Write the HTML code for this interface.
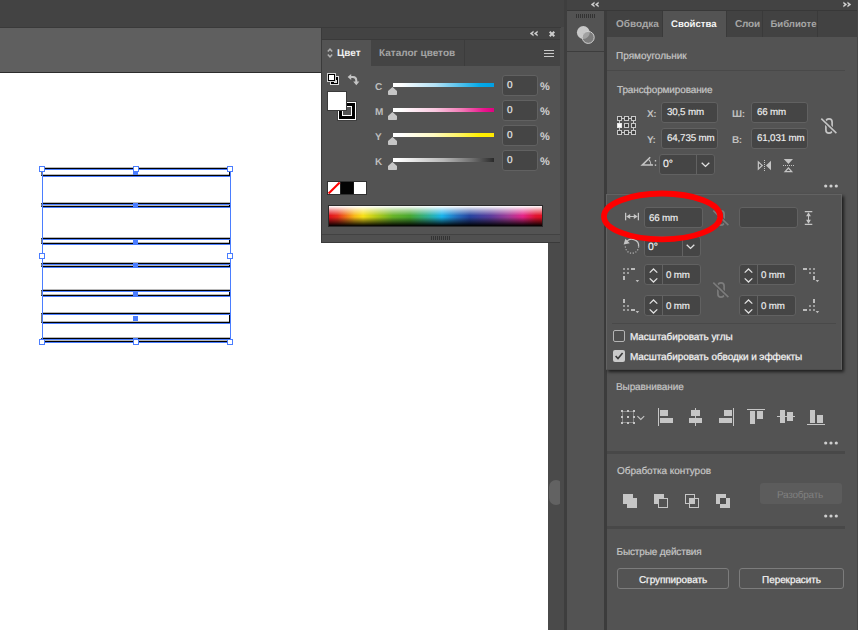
<!DOCTYPE html>
<html>
<head>
<meta charset="utf-8">
<style>
html,body{margin:0;padding:0;}
body{width:858px;height:630px;overflow:hidden;position:relative;background:#535353;font-family:"Liberation Sans",sans-serif;font-size:11px;color:#d6d6d6;text-rendering:geometricPrecision;}
.abs{position:absolute;}
.t{position:absolute;white-space:nowrap;line-height:1;}
.inp{position:absolute;background:#454545;border:1px solid #616161;border-radius:3px;box-sizing:border-box;color:#e8e8e8;}
.inp span{position:absolute;left:6px;top:4px;white-space:nowrap;line-height:1;font-size:11px;}
.lab{font-size:10px;color:#c6c6c6;-webkit-text-stroke:0.2px #c6c6c6;}
.inp span.v{left:5px;top:5px;font-size:9.75px;letter-spacing:-0.15px;color:#f0f0f0;-webkit-text-stroke:0.15px #f0f0f0;}
.chk{font-size:10px;color:#f2f2f2;-webkit-text-stroke:0.25px #f2f2f2;letter-spacing:-0.08px;}
.sep{position:absolute;background:#484848;height:3px;left:607px;width:251px;}
svg{position:absolute;overflow:visible;}
</style>
</head>
<body>
<!-- top app bar -->
<div class="abs" style="left:0;top:0;width:566px;height:27px;background:#434343;"></div>
<!-- document tab strip -->
<div class="abs" style="left:0;top:27px;width:322px;height:45px;background:#5f5f5f;border-top:1px solid #3a3a3a;box-sizing:border-box;"></div>
<div class="abs" style="left:0;top:72px;width:322px;height:1px;background:#2c2c2c;"></div>
<!-- canvas -->
<div class="abs" style="left:0;top:73px;width:548px;height:557px;background:#ffffff;"></div>
<!-- scrollbar -->
<div class="abs" style="left:548px;top:27px;width:16px;height:603px;background:#4a4a4a;"></div>
<div class="abs" style="left:549px;top:480px;width:14px;height:25px;border-radius:7px;background:#626262;"></div>
<div class="abs" style="left:564px;top:0;width:3px;height:630px;background:#3e3e3e;"></div>
<!-- dock -->
<div class="abs" style="left:567px;top:0;width:291px;height:10px;background:#434343;"></div>
<div class="abs" style="left:567px;top:10px;width:291px;height:1px;background:#383838;"></div>
<div class="abs" style="left:567px;top:11px;width:37px;height:619px;background:#535353;"></div>
<div class="abs" style="left:567px;top:51px;width:37px;height:1px;background:#3d3d3d;"></div>
<div class="abs" style="left:604px;top:11px;width:3px;height:619px;background:#3c3c3c;"></div>
<!-- properties panel bg -->
<div class="abs" style="left:607px;top:11px;width:251px;height:619px;background:#535353;"></div>
<div class="abs" style="left:607px;top:11px;width:251px;height:26px;background:#424242;"></div>

<!--COLORPANEL-->
<!-- color panel -->
<div class="abs" style="left:321px;top:27px;width:240px;height:216px;background:#3a3a3a;"></div>
<div class="abs" style="left:322px;top:28px;width:238px;height:12px;background:#434343;"></div>
<div class="abs" style="left:322px;top:39px;width:238px;height:1px;background:#3a3a3a;"></div>
<div class="abs" style="left:322px;top:40px;width:238px;height:26px;background:#444444;"></div>
<div class="abs" style="left:322px;top:40px;width:49px;height:27px;background:#535353;"></div>
<div class="abs" style="left:464px;top:40px;width:1px;height:26px;background:#3c3c3c;"></div>
<div class="abs" style="left:322px;top:66px;width:238px;height:168px;background:#535353;"></div>
<div class="abs" style="left:322px;top:40px;width:49px;height:27px;background:#535353;"></div>
<div class="abs" style="left:322px;top:234px;width:238px;height:1px;background:#424242;"></div>
<div class="abs" style="left:322px;top:235px;width:238px;height:7px;background:#505050;"></div>
<div class="abs" style="left:560px;top:28px;width:4px;height:602px;background:#4a4a4a;"></div>
<!-- header icons -->
<svg style="left:530px;top:31px;" width="8" height="5" viewBox="0 0 8 5"><path d="M3.4 0 L0 2.5 L3.4 5 L3.4 3.5 L2.1 2.5 L3.4 1.5 Z M7.5 0 L4.1 2.5 L7.5 5 L7.5 3.5 L6.2 2.5 L7.5 1.5 Z" fill="#d4d4d4" stroke="#d4d4d4" stroke-width="0.3"/></svg>
<svg style="left:549px;top:31px;" width="6" height="6" viewBox="0 0 6 6"><path d="M0.7 0.7 L5.3 5.3 M5.3 0.7 L0.7 5.3" stroke="#cccccc" stroke-width="2"/></svg>
<svg style="left:544px;top:50px;" width="10" height="7" viewBox="0 0 10 7" shape-rendering="crispEdges"><path d="M0 0.5 H10 M0 3.5 H10 M0 6.5 H10" stroke="#c8c8c8" stroke-width="1"/></svg>
<!-- tab labels -->
<svg style="left:327px;top:48px;" width="6" height="10" viewBox="0 0 6 10"><path d="M0.8 3.6 L3 1.2 L5.2 3.6 M0.8 6.4 L3 8.8 L5.2 6.4" stroke="#b0b0b0" stroke-width="1.5" fill="none"/></svg>
<div class="t" id="tcvet" style="left:337px;top:49px;font-size:10px;font-weight:bold;color:#f0f0f0;">Цвет</div>
<div class="t" id="tkat" style="left:379px;top:49px;font-size:10px;font-weight:bold;color:#a4a4a4;">Каталог цветов</div>
<!-- fill/stroke -->
<svg style="left:327px;top:73px;" width="12" height="12" viewBox="0 0 12 12" shape-rendering="crispEdges"><rect x="3" y="3" width="9" height="9" fill="#e0e0e0"/><rect x="4" y="4" width="7" height="7" fill="#000"/><rect x="7" y="7" width="3" height="3" fill="#ddd"/><rect x="8" y="8" width="2" height="2" fill="#000" opacity="0"/><rect x="0" y="0" width="9" height="9" fill="#d0d0d0"/><rect x="1" y="1" width="7" height="7" fill="#000"/><rect x="2" y="2" width="5" height="5" fill="#fff"/></svg>
<svg style="left:347px;top:73px;" width="13" height="13" viewBox="0 0 13 13"><path d="M3.5 4 H6 Q9.3 4 9.3 7.5 V9" stroke="#c4c4c4" stroke-width="2" fill="none"/><path d="M0.6 4 L4.2 1 V7 Z M9.3 12.3 L6.2 8.6 H12.4 Z" fill="#c4c4c4"/></svg>
<svg style="left:337px;top:101px;" width="20" height="20" viewBox="0 0 20 20" shape-rendering="crispEdges"><rect width="20" height="20" fill="#3e3e3e"/><rect x="1" y="1" width="18" height="18" fill="#fff"/><rect x="2" y="2" width="16" height="16" fill="#000"/><rect x="5" y="5" width="10" height="10" fill="#fff"/><rect x="6" y="6" width="8" height="8" fill="#535353"/></svg>
<div class="abs" style="left:327px;top:91px;width:20px;height:20px;background:#fff;border:1px solid #3a3a3a;box-sizing:border-box;"></div>
<div class="t" style="left:375px;top:83px;font-size:10px;font-weight:bold;color:#bdbdbd;">C</div>
<div class="abs" style="left:393px;top:83px;width:101px;height:4px;background:linear-gradient(to right,#fff,#fff 8%,#b4e2f6 42%,#4cbfec 68%,#04a9e8 86%,#009fe3);"></div>
<svg style="left:388px;top:87px;" width="9" height="9" viewBox="0 0 9 9"><path d="M4.5 0 L9 4 V7.2 Q9 8 8.2 8 H0.8 Q0 8 0 7.2 V4 Z" fill="#c6c6c6"/></svg>
<div class="inp" style="left:502px;top:75px;width:36px;height:21px;border-radius:3px;"><span style="left:4px;top:5px;font-size:10px;-webkit-text-stroke:0.2px #e8e8e8;">0</span></div>
<div class="t" style="left:540px;top:82px;font-size:11px;font-weight:bold;color:#d0d0d0;">%</div>
<div class="t" style="left:375px;top:108px;font-size:10px;font-weight:bold;color:#bdbdbd;">M</div>
<div class="abs" style="left:393px;top:108px;width:101px;height:4px;background:linear-gradient(to right,#fff,#fff 8%,#fac8e0 42%,#f27ab6 68%,#e9168e 90%,#e0007f);"></div>
<svg style="left:388px;top:112px;" width="9" height="9" viewBox="0 0 9 9"><path d="M4.5 0 L9 4 V7.2 Q9 8 8.2 8 H0.8 Q0 8 0 7.2 V4 Z" fill="#c6c6c6"/></svg>
<div class="inp" style="left:502px;top:100px;width:36px;height:21px;border-radius:3px;"><span style="left:4px;top:5px;font-size:10px;-webkit-text-stroke:0.2px #e8e8e8;">0</span></div>
<div class="t" style="left:540px;top:107px;font-size:11px;font-weight:bold;color:#d0d0d0;">%</div>
<div class="t" style="left:375px;top:133px;font-size:10px;font-weight:bold;color:#bdbdbd;">Y</div>
<div class="abs" style="left:393px;top:133px;width:101px;height:4px;background:linear-gradient(to right,#fff,#fff 8%,#fffbc4 40%,#fff566 65%,#fff000 86%,#ffe800);"></div>
<svg style="left:388px;top:137px;" width="9" height="9" viewBox="0 0 9 9"><path d="M4.5 0 L9 4 V7.2 Q9 8 8.2 8 H0.8 Q0 8 0 7.2 V4 Z" fill="#c6c6c6"/></svg>
<div class="inp" style="left:502px;top:125px;width:36px;height:21px;border-radius:3px;"><span style="left:4px;top:5px;font-size:10px;-webkit-text-stroke:0.2px #e8e8e8;">0</span></div>
<div class="t" style="left:540px;top:132px;font-size:11px;font-weight:bold;color:#d0d0d0;">%</div>
<div class="t" style="left:375px;top:158px;font-size:10px;font-weight:bold;color:#bdbdbd;">K</div>
<div class="abs" style="left:393px;top:158px;width:101px;height:4px;background:linear-gradient(to right,#fff,#fff 5%,#b8b8b8 50%,#707070 78%,#2a2a2a 100%);"></div>
<svg style="left:388px;top:162px;" width="9" height="9" viewBox="0 0 9 9"><path d="M4.5 0 L9 4 V7.2 Q9 8 8.2 8 H0.8 Q0 8 0 7.2 V4 Z" fill="#c6c6c6"/></svg>
<div class="inp" style="left:502px;top:150px;width:36px;height:21px;border-radius:3px;"><span style="left:4px;top:5px;font-size:10px;-webkit-text-stroke:0.2px #e8e8e8;">0</span></div>
<div class="t" style="left:540px;top:157px;font-size:11px;font-weight:bold;color:#d0d0d0;">%</div>

<!-- swatches -->
<svg style="left:327px;top:181px;" width="40" height="14" viewBox="0 0 40 14"><rect width="40" height="14" fill="#303030" shape-rendering="crispEdges"/><rect x="1" y="1" width="12.3" height="12" fill="#fff"/><rect x="13.3" y="1" width="13.3" height="12" fill="#030303"/><rect x="27" y="1" width="12" height="12" fill="#fff"/><path d="M1.6 12.4 L12.7 1.6" stroke="#ff0000" stroke-width="2.1"/><rect x="0" y="0" width="1" height="14" fill="#303030"/><rect x="0" y="13" width="14" height="1" fill="#303030"/><rect x="0" y="0" width="14" height="1" fill="#303030"/></svg>
<!-- spectrum -->
<div class="abs" style="left:328px;top:205px;width:215px;height:22px;background:#2a2a2a;"></div>
<div class="abs" style="left:329px;top:206px;width:213px;height:20px;background:linear-gradient(to right,#e0101c 0%,#e8301c 4%,#f8b818 12%,#f8e018 16%,#b8cc18 22%,#68b428 30%,#48a830 38%,#30b090 46%,#18b4ec 53%,#2470c0 60%,#2444a0 66%,#5c3c9c 76%,#a03c98 84%,#e42488 91%,#e01430 97%,#e01020 100%);"></div>
<div class="abs" style="left:329px;top:206px;width:213px;height:20px;background:linear-gradient(to bottom,rgba(255,255,255,1) 0%,rgba(255,255,255,0.55) 20%,rgba(255,255,255,0) 48%,rgba(0,0,0,0) 55%,rgba(0,0,0,0.55) 80%,rgba(0,0,0,1) 100%);"></div>
<!-- grip -->
<div class="abs" style="left:431px;top:236px;width:19px;height:4px;background:repeating-linear-gradient(to right,#333 0,#333 1px,transparent 1px,transparent 2px);"></div>
<!--/COLORPANEL-->
<!--ARTWORK-->
<div class="abs" style="left:42px;top:167px;width:188px;height:1px;background:rgba(0,0,0,0.28);"></div>
<div class="abs" style="left:43px;top:174px;width:186px;height:1px;background:rgba(0,0,0,0.28);"></div>
<div class="abs" style="left:42px;top:202px;width:188px;height:1px;background:rgba(0,0,0,0.28);"></div>
<div class="abs" style="left:43px;top:205px;width:186px;height:1px;background:rgba(0,0,0,0.28);"></div>
<div class="abs" style="left:42px;top:237px;width:188px;height:1px;background:rgba(0,0,0,0.28);"></div>
<div class="abs" style="left:43px;top:242px;width:186px;height:1px;background:rgba(0,0,0,0.28);"></div>
<div class="abs" style="left:42px;top:262px;width:188px;height:1px;background:rgba(0,0,0,0.28);"></div>
<div class="abs" style="left:43px;top:265px;width:186px;height:1px;background:rgba(0,0,0,0.28);"></div>
<div class="abs" style="left:42px;top:289px;width:188px;height:1px;background:rgba(0,0,0,0.28);"></div>
<div class="abs" style="left:43px;top:294px;width:186px;height:1px;background:rgba(0,0,0,0.28);"></div>
<div class="abs" style="left:42px;top:312px;width:188px;height:1px;background:rgba(0,0,0,0.28);"></div>
<div class="abs" style="left:43px;top:321px;width:186px;height:1px;background:rgba(0,0,0,0.28);"></div>
<div class="abs" style="left:42px;top:337px;width:188px;height:1px;background:rgba(0,0,0,0.28);"></div>
<div class="abs" style="left:43px;top:340px;width:186px;height:1px;background:rgba(0,0,0,0.28);"></div>
<div class="abs" style="left:41px;top:168px;width:189px;height:8px;border:1px solid #000;border-left-color:#777;box-sizing:border-box;"></div>
<div class="abs" style="left:42px;top:169px;width:189px;height:1px;background:#4a7dff;"></div>
<div class="abs" style="left:42px;top:176px;width:189px;height:1px;background:#4a7dff;"></div>
<div class="abs" style="left:133px;top:170px;width:5px;height:5px;background:#4a7dff;"></div>
<div class="abs" style="left:41px;top:203px;width:189px;height:4px;border:1px solid #000;border-left-color:#777;box-sizing:border-box;"></div>
<div class="abs" style="left:42px;top:204px;width:189px;height:1px;background:#4a7dff;"></div>
<div class="abs" style="left:42px;top:207px;width:189px;height:1px;background:#4a7dff;"></div>
<div class="abs" style="left:133px;top:203px;width:5px;height:5px;background:#4a7dff;"></div>
<div class="abs" style="left:41px;top:238px;width:189px;height:6px;border:1px solid #000;border-left-color:#777;box-sizing:border-box;"></div>
<div class="abs" style="left:42px;top:239px;width:189px;height:1px;background:#4a7dff;"></div>
<div class="abs" style="left:42px;top:244px;width:189px;height:1px;background:#4a7dff;"></div>
<div class="abs" style="left:133px;top:239px;width:5px;height:5px;background:#4a7dff;"></div>
<div class="abs" style="left:41px;top:263px;width:189px;height:4px;border:1px solid #000;border-left-color:#777;box-sizing:border-box;"></div>
<div class="abs" style="left:42px;top:264px;width:189px;height:1px;background:#4a7dff;"></div>
<div class="abs" style="left:42px;top:267px;width:189px;height:1px;background:#4a7dff;"></div>
<div class="abs" style="left:133px;top:263px;width:5px;height:5px;background:#4a7dff;"></div>
<div class="abs" style="left:41px;top:290px;width:189px;height:6px;border:1px solid #000;border-left-color:#777;box-sizing:border-box;"></div>
<div class="abs" style="left:42px;top:291px;width:189px;height:1px;background:#4a7dff;"></div>
<div class="abs" style="left:42px;top:296px;width:189px;height:1px;background:#4a7dff;"></div>
<div class="abs" style="left:133px;top:291px;width:5px;height:5px;background:#4a7dff;"></div>
<div class="abs" style="left:41px;top:313px;width:189px;height:10px;border:1px solid #000;border-left-color:#777;box-sizing:border-box;"></div>
<div class="abs" style="left:42px;top:314px;width:189px;height:1px;background:#4a7dff;"></div>
<div class="abs" style="left:42px;top:323px;width:189px;height:1px;background:#4a7dff;"></div>
<div class="abs" style="left:133px;top:316px;width:5px;height:5px;background:#4a7dff;"></div>
<div class="abs" style="left:41px;top:338px;width:189px;height:4px;border:1px solid #000;border-left-color:#777;box-sizing:border-box;"></div>
<div class="abs" style="left:42px;top:339px;width:189px;height:1px;background:#4a7dff;"></div>
<div class="abs" style="left:42px;top:342px;width:189px;height:1px;background:#4a7dff;"></div>
<div class="abs" style="left:133px;top:338px;width:5px;height:5px;background:#4a7dff;"></div>
<div class="abs" style="left:42px;top:169px;width:1px;height:174px;background:#4a7dff;"></div>
<div class="abs" style="left:230px;top:169px;width:1px;height:174px;background:#4a7dff;"></div>
<div class="abs" style="left:39px;top:166px;width:6px;height:6px;background:#fff;border:1px solid #4a7dff;box-sizing:border-box;"></div>
<div class="abs" style="left:39px;top:253px;width:6px;height:6px;background:#fff;border:1px solid #4a7dff;box-sizing:border-box;"></div>
<div class="abs" style="left:39px;top:339px;width:6px;height:6px;background:#fff;border:1px solid #4a7dff;box-sizing:border-box;"></div>
<div class="abs" style="left:133px;top:166px;width:6px;height:6px;background:#fff;border:1px solid #4a7dff;box-sizing:border-box;"></div>
<div class="abs" style="left:133px;top:339px;width:6px;height:6px;background:#fff;border:1px solid #4a7dff;box-sizing:border-box;"></div>
<div class="abs" style="left:227px;top:166px;width:6px;height:6px;background:#fff;border:1px solid #4a7dff;box-sizing:border-box;"></div>
<div class="abs" style="left:227px;top:253px;width:6px;height:6px;background:#fff;border:1px solid #4a7dff;box-sizing:border-box;"></div>
<div class="abs" style="left:227px;top:339px;width:6px;height:6px;background:#fff;border:1px solid #4a7dff;box-sizing:border-box;"></div>
<!--/ARTWORK-->
<!--PROPS-->
<!-- dock top icons -->
<svg style="left:591px;top:2px;" width="8" height="5" viewBox="0 0 8 5"><path d="M3.4 0 L0 2.5 L3.4 5 L3.4 3.5 L2.1 2.5 L3.4 1.5 Z M7.5 0 L4.1 2.5 L7.5 5 L7.5 3.5 L6.2 2.5 L7.5 1.5 Z" fill="#d4d4d4" stroke="#d4d4d4" stroke-width="0.3"/></svg>
<svg style="left:843px;top:2px;" width="8" height="5" viewBox="0 0 8 5"><path d="M0.5 0 L3.9 2.5 L0.5 5 L0.5 3.5 L1.8 2.5 L0.5 1.5 Z M4.6 0 L8 2.5 L4.6 5 L4.6 3.5 L5.9 2.5 L4.6 1.5 Z" fill="#d4d4d4" stroke="#d4d4d4" stroke-width="0.3"/></svg>
<div class="abs" style="left:576px;top:14px;width:19px;height:4px;background:repeating-linear-gradient(to right,#333 0,#333 1px,transparent 1px,transparent 2px);"></div>
<svg style="left:575px;top:24px;" width="22" height="22" viewBox="0 0 22 22"><defs><clipPath id="c1"><circle cx="8.3" cy="8.5" r="6.4"/></clipPath></defs><circle cx="8.3" cy="8.5" r="6.4" fill="#c8c8c8"/><circle cx="13.2" cy="13.4" r="6" fill="#7c7c7c"/><circle cx="13.2" cy="13.4" r="6" fill="#a2a2a2" clip-path="url(#c1)"/><circle cx="13.2" cy="13.4" r="6" fill="none" stroke="#d0d0d0" stroke-width="1"/></svg>
<!-- tabs -->
<div class="abs" style="left:663px;top:11px;width:63px;height:27px;background:#535353;"></div>
<div class="abs" style="left:662px;top:11px;width:1px;height:26px;background:#3a3a3a;"></div>
<div class="abs" style="left:726px;top:11px;width:1px;height:26px;background:#3a3a3a;"></div>
<div class="abs" style="left:762px;top:11px;width:1px;height:26px;background:#3a3a3a;"></div>
<div class="abs" style="left:817px;top:11px;width:1px;height:26px;background:#3a3a3a;"></div>
<div class="abs" style="left:857px;top:0px;width:1px;height:630px;background:#464646;"></div>
<div class="t" style="left:616px;top:20px;font-size:10px;font-weight:bold;color:#a6a6a6;">Обводка</div>
<div class="t" style="left:671px;top:20px;font-size:9.6px;font-weight:bold;color:#f4f4f4;">Свойства</div>
<div class="t" style="left:735px;top:20px;font-size:10px;font-weight:bold;color:#a6a6a6;letter-spacing:-0.2px;">Слои</div>
<div class="t" style="left:770.4px;top:20px;font-size:9.6px;font-weight:bold;color:#a6a6a6;">Библиоте</div>
<!-- object type -->
<div class="t lab" style="left:616px;top:52px;">Прямоугольник</div>
<div class="abs" style="left:607px;top:70px;width:238px;height:1px;background:#494949;"></div>
<div class="t lab" style="left:617px;top:86px;letter-spacing:-0.12px;">Трансформирование</div>
<!-- reference point -->
<svg style="left:617px;top:116px;" width="19" height="19" viewBox="0 0 19 19" shape-rendering="crispEdges"><g fill="#404040" stroke="#c8c8c8" stroke-width="1"><path d="M2.5 5 V7 M2.5 12 V14 M16.5 5 V7 M16.5 12 V14 M5 2.5 H7 M12 2.5 H14 M5 16.5 H7 M12 16.5 H14" fill="none"/><rect x="0.5" y="0.5" width="4" height="4"/><rect x="7.5" y="0.5" width="4" height="4"/><rect x="14.5" y="0.5" width="4" height="4"/><rect x="0.5" y="7.5" width="4" height="4" fill="#fff" stroke="#e8e8e8"/><rect x="7.5" y="7.5" width="4" height="4"/><rect x="14.5" y="7.5" width="4" height="4"/><rect x="0.5" y="14.5" width="4" height="4"/><rect x="7.5" y="14.5" width="4" height="4"/><rect x="14.5" y="14.5" width="4" height="4"/></g></svg>
<div class="t" style="left:647px;top:109.6px;font-size:10px;font-weight:bold;color:#c0c0c0;letter-spacing:-0.4px;">X:</div>
<div class="t" style="left:647px;top:135.6px;font-size:10px;font-weight:bold;color:#c0c0c0;letter-spacing:-0.4px;">Y:</div>
<div class="t" style="left:732px;top:109.6px;font-size:10px;font-weight:bold;color:#c0c0c0;letter-spacing:-0.4px;">Ш:</div>
<div class="t" style="left:732px;top:135.6px;font-size:10px;font-weight:bold;color:#c0c0c0;letter-spacing:-0.4px;">В:</div>
<div class="inp" style="left:661px;top:102px;width:57px;height:21px;"><span class="v">30,5 mm</span></div>
<div class="inp" style="left:661px;top:128px;width:57px;height:21px;"><span class="v">64,735 mm</span></div>
<div class="inp" style="left:751px;top:102px;width:57px;height:21px;"><span class="v">66 mm</span></div>
<div class="inp" style="left:751px;top:128px;width:57px;height:21px;"><span class="v">61,031 mm</span></div>
<!-- angle -->
<svg style="left:641px;top:156px;" width="17" height="11" viewBox="0 0 17 11"><path d="M9.2 1.2 L1.2 9.1 H12" fill="none" stroke="#c4c4c4" stroke-width="1.5" stroke-linejoin="miter"/><path d="M7.6 3.4 Q9.8 5.2 10 9" fill="none" stroke="#c4c4c4" stroke-width="1.1"/><rect x="13.8" y="4" width="1.4" height="1.5" fill="#c4c4c4"/><rect x="13.8" y="8.4" width="1.4" height="1.5" fill="#c4c4c4"/></svg>
<div class="inp" style="left:659px;top:154px;width:56px;height:21px;"><span class="v" style="left:3px;font-size:10.5px;top:4px;">0°</span></div>
<div class="abs" style="left:696px;top:155px;width:1px;height:19px;background:#626262;"></div>
<svg style="left:701px;top:162px;" width="9" height="6" viewBox="0 0 9 6"><path d="M0.7 0.8 L4.5 4.4 L8.3 0.8" fill="none" stroke="#e0e0e0" stroke-width="1.4"/></svg>
<!-- chain unlinked -->
<svg style="left:820px;top:117px;" width="18" height="18" viewBox="0 0 18 18"><rect x="5.9" y="1.9" width="6.2" height="14.2" rx="3.1" ry="3.1" fill="none" stroke="#c4c4c4" stroke-width="1.7"/><path d="M1.3 1.6 L16.4 16.1" stroke="#535353" stroke-width="4"/><path d="M1.3 1.6 L16.4 16.1" stroke="#c4c4c4" stroke-width="1.5"/></svg>
<!-- flip icons -->
<svg style="left:757px;top:159px;" width="15" height="13" viewBox="757 159 15 13"><path d="M758.35 161.9 L762.2 165.5 L758.35 169.1 Z" fill="none" stroke="#c4c4c4" stroke-width="1.25" stroke-linejoin="miter"/><path d="M771 160.7 L766 165.5 L771 170.3 Z" fill="#c4c4c4"/><g fill="#c4c4c4" shape-rendering="crispEdges"><rect x="764" y="160" width="1" height="1"/><rect x="764" y="162" width="1" height="1"/><rect x="764" y="164" width="1" height="1"/><rect x="764" y="166" width="1" height="1"/><rect x="764" y="168" width="1" height="1"/><rect x="764" y="170" width="1" height="1"/></g></svg>
<svg style="left:782px;top:158px;" width="13" height="15" viewBox="782 158 13 15"><path d="M783.8 158.9 L788.4 164 L793 158.9 Z" fill="#c4c4c4"/><path d="M785.1 171.65 L788.4 168 L791.7 171.65 Z" fill="none" stroke="#c4c4c4" stroke-width="1.25" stroke-linejoin="miter"/><g fill="#c4c4c4" shape-rendering="crispEdges"><rect x="783" y="165" width="1" height="1"/><rect x="785" y="165" width="1" height="1"/><rect x="787" y="165" width="1" height="1"/><rect x="789" y="165" width="1" height="1"/><rect x="791" y="165" width="1" height="1"/><rect x="793" y="165" width="1" height="1"/></g></svg>
<svg style="left:824px;top:184px;" width="14" height="4" viewBox="0 0 14 4"><circle cx="1.7" cy="2" r="1.6" fill="#cfcfcf"/><circle cx="7" cy="2" r="1.6" fill="#cfcfcf"/><circle cx="12.3" cy="2" r="1.6" fill="#cfcfcf"/></svg>
<!--POPUP-->
<!-- popup -->
<div class="abs" style="left:606px;top:194px;width:236px;height:176px;background:#535353;border:1px solid #626262;border-bottom-color:#4c4c4c;box-sizing:border-box;box-shadow:2px 2px 3px 0px rgba(0,0,0,0.65);"></div>
<!-- width icon -->
<svg style="left:625px;top:213px;" width="14" height="7" viewBox="0 0 14 7"><rect x="0" y="-0.2" width="1.25" height="7.5" fill="#c6c6c6"/><rect x="12.75" y="-0.2" width="1.25" height="7.5" fill="#c6c6c6"/><rect x="2" y="3" width="10" height="1" fill="#c6c6c6"/><path d="M1.2 3.5 L5.2 1.1 V5.9 Z M12.8 3.5 L8.8 1.1 V5.9 Z" fill="#c6c6c6"/></svg>
<div class="inp" style="left:644px;top:207px;width:59px;height:21px;"><span class="v" style="left:4px;top:6px;">66 mm</span></div>
<!-- dim chain -->
<svg style="left:712px;top:209px;" width="18" height="18" viewBox="0 0 18 18"><rect x="5.9" y="1.9" width="6.2" height="14.2" rx="3.1" ry="3.1" fill="none" stroke="#7a7a7a" stroke-width="1.7"/><path d="M1.3 1.6 L16.4 16.1" stroke="#535353" stroke-width="4"/><path d="M1.3 1.6 L16.4 16.1" stroke="#7a7a7a" stroke-width="1.5"/></svg>
<div class="inp" style="left:739px;top:207px;width:59px;height:21px;"></div>
<!-- height icon -->
<svg style="left:805px;top:211px;" width="7" height="14" viewBox="0 0 7 14"><rect x="-0.2" y="0" width="7.5" height="1.25" fill="#c6c6c6"/><rect x="-0.2" y="12.75" width="7.5" height="1.25" fill="#c6c6c6"/><rect x="3" y="2" width="1" height="10" fill="#c6c6c6"/><path d="M3.5 1.2 L1.1 5.2 H5.9 Z M3.5 12.8 L1.1 8.8 H5.9 Z" fill="#c6c6c6"/></svg>
<!-- rotate -->
<svg style="left:623px;top:238px;" width="18" height="17" viewBox="0 0 18 17"><path d="M3.2 4.8 A6.6 6.6 0 0 1 15.6 8.6" fill="none" stroke="#c4c4c4" stroke-width="1.3"/><path d="M15.6 8.6 A6.6 6.6 0 1 1 2.6 7" fill="none" stroke="#b0b0b0" stroke-width="1.2" stroke-dasharray="1.2 1.6"/><path d="M0.6 6.6 L2.4 0.8 L6.8 5.2 Z" fill="#c4c4c4"/></svg>
<div class="inp" style="left:644px;top:236px;width:57px;height:21px;"><span class="v" style="left:3px;font-size:10.5px;top:5px;">0°</span></div>
<div class="abs" style="left:682px;top:237px;width:1px;height:19px;background:#626262;"></div>
<svg style="left:686px;top:244px;" width="9" height="6" viewBox="0 0 9 6"><path d="M0.7 0.8 L4.5 4.4 L8.3 0.8" fill="none" stroke="#e0e0e0" stroke-width="1.4"/></svg>
<!-- corner widgets -->
<div class="inp" style="left:644px;top:264px;width:57px;height:21px;"><span class="v" style="left:21px;top:6px;">0 mm</span></div>
<div class="abs" style="left:662px;top:265px;width:1px;height:19px;background:#626262;"></div>
<svg style="left:649px;top:268px;" width="9" height="15" viewBox="0 0 9 15"><path d="M0.7 4.6 L4.5 1 L8.3 4.6 M0.7 10.4 L4.5 14 L8.3 10.4" fill="none" stroke="#e0e0e0" stroke-width="1.3"/></svg>
<div class="inp" style="left:644px;top:295px;width:57px;height:21px;"><span class="v" style="left:21px;top:6px;">0 mm</span></div>
<div class="abs" style="left:662px;top:296px;width:1px;height:19px;background:#626262;"></div>
<svg style="left:649px;top:299px;" width="9" height="15" viewBox="0 0 9 15"><path d="M0.7 4.6 L4.5 1 L8.3 4.6 M0.7 10.4 L4.5 14 L8.3 10.4" fill="none" stroke="#e0e0e0" stroke-width="1.3"/></svg>
<div class="inp" style="left:739px;top:264px;width:57px;height:21px;"><span class="v" style="left:21px;top:6px;">0 mm</span></div>
<div class="abs" style="left:757px;top:265px;width:1px;height:19px;background:#626262;"></div>
<svg style="left:744px;top:268px;" width="9" height="15" viewBox="0 0 9 15"><path d="M0.7 4.6 L4.5 1 L8.3 4.6 M0.7 10.4 L4.5 14 L8.3 10.4" fill="none" stroke="#e0e0e0" stroke-width="1.3"/></svg>
<div class="inp" style="left:739px;top:295px;width:57px;height:21px;"><span class="v" style="left:21px;top:6px;">0 mm</span></div>
<div class="abs" style="left:757px;top:296px;width:1px;height:19px;background:#626262;"></div>
<svg style="left:744px;top:299px;" width="9" height="15" viewBox="0 0 9 15"><path d="M0.7 4.6 L4.5 1 L8.3 4.6 M0.7 10.4 L4.5 14 L8.3 10.4" fill="none" stroke="#e0e0e0" stroke-width="1.3"/></svg>

<svg style="left:620px;top:266px;" width="202" height="50" viewBox="620 266 202 50" shape-rendering="crispEdges"><rect x="623" y="268" width="2" height="2" fill="#9c9c9c"/><rect x="627" y="268" width="2" height="2" fill="#9c9c9c"/><rect x="631" y="268" width="4" height="2" fill="#bcbcbc"/><rect x="623" y="272" width="2" height="2" fill="#9c9c9c"/><rect x="627" y="272" width="2" height="2" fill="#9c9c9c"/><rect x="623" y="276" width="2" height="4" fill="#bcbcbc"/><path d="M635.6 280 H639.2 L637.4 282.2 Z" fill="#bcbcbc" shape-rendering="auto"/><rect x="623" y="299" width="2" height="4" fill="#bcbcbc"/><rect x="623" y="305" width="2" height="2" fill="#9c9c9c"/><rect x="627" y="305" width="2" height="2" fill="#9c9c9c"/><rect x="623" y="309" width="2" height="2" fill="#9c9c9c"/><rect x="627" y="309" width="2" height="2" fill="#9c9c9c"/><rect x="631" y="309" width="4" height="2" fill="#bcbcbc"/><path d="M635.6 311 H639.2 L637.4 313.2 Z" fill="#bcbcbc" shape-rendering="auto"/><rect x="803" y="268" width="4" height="2" fill="#bcbcbc"/><rect x="809" y="268" width="2" height="2" fill="#9c9c9c"/><rect x="813" y="268" width="2" height="2" fill="#9c9c9c"/><rect x="809" y="272" width="2" height="2" fill="#9c9c9c"/><rect x="813" y="272" width="2" height="2" fill="#9c9c9c"/><rect x="813" y="276" width="2" height="4" fill="#bcbcbc"/><path d="M815.6 280 H819.2 L817.4 282.2 Z" fill="#bcbcbc" shape-rendering="auto"/><rect x="813" y="299" width="2" height="4" fill="#bcbcbc"/><rect x="809" y="305" width="2" height="2" fill="#9c9c9c"/><rect x="813" y="305" width="2" height="2" fill="#9c9c9c"/><rect x="809" y="309" width="2" height="2" fill="#9c9c9c"/><rect x="813" y="309" width="2" height="2" fill="#9c9c9c"/><rect x="803" y="309" width="4" height="2" fill="#bcbcbc"/><path d="M815.6 311 H819.2 L817.4 313.2 Z" fill="#bcbcbc" shape-rendering="auto"/></svg>
<svg style="left:712px;top:281px;" width="18" height="18" viewBox="0 0 18 18"><rect x="5.9" y="1.9" width="6.2" height="14.2" rx="3.1" ry="3.1" fill="none" stroke="#7c7c7c" stroke-width="1.7"/><path d="M1.3 1.6 L16.4 16.1" stroke="#535353" stroke-width="4"/><path d="M1.3 1.6 L16.4 16.1" stroke="#7c7c7c" stroke-width="1.5"/></svg>
<div class="abs" style="left:612px;top:323px;width:224px;height:1px;background:#494949;"></div>
<!-- checkboxes -->
<div class="abs" style="left:613px;top:330px;width:12px;height:12px;border:1px solid #b4b4b4;border-radius:2px;box-sizing:border-box;background:#4f4f4f;"></div>
<div class="abs" style="left:613px;top:350px;width:12px;height:12px;border-radius:2px;background:#cacaca;"></div>
<svg style="left:613px;top:350px;" width="12" height="12" viewBox="0 0 12 12"><path d="M2.6 6 L5 8.6 L9.6 3" fill="none" stroke="#3a3a3a" stroke-width="1.6"/></svg>
<div class="t chk" style="left:630px;top:333px;">Масштабировать углы</div>
<div class="t chk" style="left:630px;top:353px;">Масштабировать обводки и эффекты</div>
<!-- red ellipse -->
<svg style="left:598px;top:187px;" width="130" height="58" viewBox="598 187 130 58"><ellipse cx="662.1" cy="216.4" rx="58.1" ry="22.9" fill="none" stroke="#fe0000" stroke-width="5.8"/></svg>
<!--/POPUP-->
<!--LOWER-->
<!-- align -->
<div class="t lab" style="left:616px;top:383px;letter-spacing:-0.1px;">Выравнивание</div>
<svg style="left:621px;top:410px;" width="25" height="14" viewBox="0 0 25 14"><g shape-rendering="crispEdges"><g fill="#858585"><rect x="1" y="1" width="12" height="1"/><rect x="1" y="12" width="12" height="1"/><rect x="1" y="1" width="1" height="12"/><rect x="12" y="1" width="1" height="12"/></g><g fill="#c6c6c6"><rect x="0" y="0" width="2" height="2"/><rect x="6" y="0" width="2" height="2"/><rect x="12" y="0" width="2" height="2"/><rect x="0" y="6" width="2" height="2"/><rect x="6" y="6" width="2" height="2"/><rect x="12" y="6" width="2" height="2"/><rect x="0" y="12" width="2" height="2"/><rect x="6" y="12" width="2" height="2"/><rect x="12" y="12" width="2" height="2"/></g></g><path d="M16.4 6.2 L19.8 9.4 L23.2 6.2" fill="none" stroke="#c6c6c6" stroke-width="1.1"/></svg>
<svg style="left:658px;top:408px;" width="176" height="18" viewBox="658 408 176 18" shape-rendering="crispEdges"><g fill="#c6c6c6">
<rect x="658" y="408" width="1" height="18"/><rect x="660" y="410" width="8" height="6"/><rect x="660" y="418" width="13" height="5"/>
<rect x="695" y="408" width="1" height="18"/><rect x="691" y="410" width="9" height="6"/><rect x="689" y="418" width="13" height="5"/>
<rect x="733" y="408" width="1" height="18"/><rect x="724" y="410" width="8" height="6"/><rect x="719" y="418" width="13" height="5"/>
<rect x="747" y="409" width="18" height="1"/><rect x="750" y="411" width="5" height="13"/><rect x="757" y="411" width="6" height="8"/>
<rect x="777" y="416" width="18" height="1"/><rect x="780" y="410" width="5" height="13"/><rect x="787" y="412" width="6" height="9"/>
<rect x="807" y="424" width="18" height="1"/><rect x="810" y="410" width="5" height="13"/><rect x="817" y="415" width="6" height="8"/>
</g></svg>
<svg style="left:824px;top:441px;" width="14" height="4" viewBox="0 0 14 4"><circle cx="1.7" cy="2" r="1.6" fill="#cfcfcf"/><circle cx="7" cy="2" r="1.6" fill="#cfcfcf"/><circle cx="12.3" cy="2" r="1.6" fill="#cfcfcf"/></svg>
<div class="sep" style="top:451px;width:238px;"></div>
<!-- pathfinder -->
<div class="t lab" style="left:617px;top:467px;letter-spacing:-0.05px;">Обработка контуров</div>
<svg style="left:623px;top:494px;" width="108" height="14" viewBox="623 494 108 14" shape-rendering="crispEdges"><rect x="623" y="494" width="10" height="10" fill="#c6c6c6"/><rect x="627" y="498" width="10" height="10" fill="#c6c6c6"/><rect x="654" y="494" width="10" height="10" fill="#c6c6c6"/><rect x="658" y="498" width="10" height="10" fill="#c6c6c6"/><rect x="659" y="499" width="8" height="8" fill="#535353"/><rect x="685" y="494" width="10" height="10" fill="#c6c6c6"/><rect x="686" y="495" width="8" height="8" fill="#535353"/><rect x="689" y="498" width="10" height="10" fill="#c6c6c6"/><rect x="690" y="499" width="8" height="8" fill="#535353"/><rect x="685" y="494" width="10" height="1" fill="#c6c6c6"/><rect x="685" y="503" width="10" height="1" fill="#c6c6c6"/><rect x="685" y="494" width="1" height="10" fill="#c6c6c6"/><rect x="694" y="494" width="1" height="10" fill="#c6c6c6"/><rect x="690" y="499" width="4" height="4" fill="#c6c6c6"/><rect x="716" y="494" width="10" height="10" fill="#c6c6c6"/><rect x="720" y="498" width="10" height="10" fill="#c6c6c6"/><rect x="720" y="498" width="6" height="6" fill="#4e4e4e"/></svg>
<div class="abs" style="left:760px;top:483px;width:82px;height:21px;background:#5c5c5c;border-radius:3px;"></div>
<div class="t" style="left:777px;top:491px;font-size:10px;color:#808080;letter-spacing:-0.25px;">Разобрать</div>
<svg style="left:824px;top:514px;" width="14" height="4" viewBox="0 0 14 4"><circle cx="1.7" cy="2" r="1.6" fill="#cfcfcf"/><circle cx="7" cy="2" r="1.6" fill="#cfcfcf"/><circle cx="12.3" cy="2" r="1.6" fill="#cfcfcf"/></svg>
<div class="sep" style="top:526px;width:238px;"></div>
<!-- quick actions -->
<div class="t lab" style="left:616.5px;top:548px;letter-spacing:-0.14px;">Быстрые действия</div>
<div class="abs" style="left:617px;top:568px;width:112px;height:21px;border:1px solid #7c7c7c;border-radius:3px;box-sizing:border-box;"></div>
<div class="abs" style="left:739px;top:568px;width:105px;height:21px;border:1px solid #7c7c7c;border-radius:3px;box-sizing:border-box;"></div>
<div class="t chk" style="left:617px;top:576px;width:112px;text-align:center;">Сгруппировать</div>
<div class="t chk" style="left:739px;top:576px;width:105px;text-align:center;">Перекрасить</div>
<!--/LOWER-->
<!--/PROPS-->
</body>
</html>
